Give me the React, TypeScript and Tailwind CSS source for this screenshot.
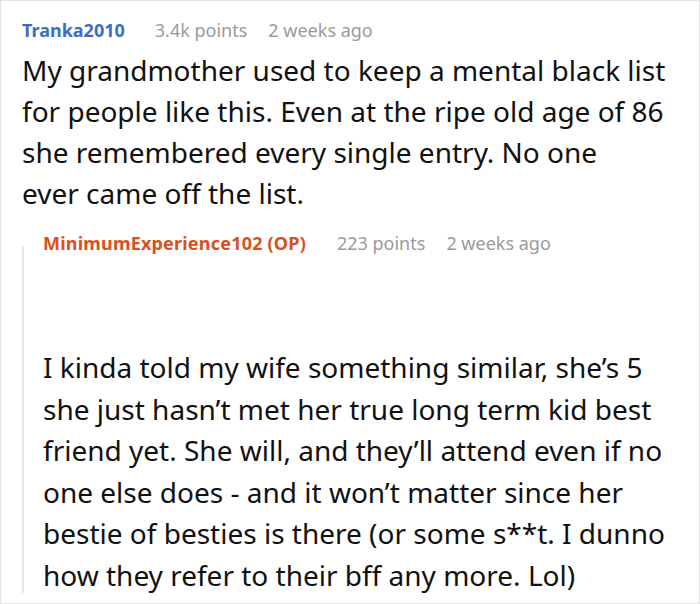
export default function App() {
  return (
    <div
      className="w-[700px] h-[604px] border border-[#e3e3e3] bg-white overflow-hidden text-[#111]"
      style={{ fontFamily: '"Noto Sans", "Open Sans", sans-serif' }}
    >
      <div className="pl-[21px] pr-2 pt-[15px]">
        <div className="flex items-baseline text-[18px] leading-[28px]">
          <span className="font-bold text-[#3c6ec2]">Tranka2010</span>
          <span className="ml-[30px] text-[#9a9a9a]">3.4k points</span>
          <span className="ml-[21px] text-[#9a9a9a]">2 weeks ago</span>
        </div>
        <p className="mt-[6px] text-[28px] leading-[41px]">
          My grandmother used to keep a mental black list
          <br />
          for people like this. Even at the ripe old age of 86
          <br />
          she remembered every single entry. No one
          <br />
          ever came off the list.
        </p>

        <div className="mt-[15px] flex">
          <div className="mt-[17px] mb-[4px] w-[2px] shrink-0 bg-[#e8e8e8]" />
          <div className="pl-[19px]">
            <div className="flex items-baseline text-[18px] leading-[28px]">
              <span className="font-bold tracking-[0.2px] text-[#d9501c]">MinimumExperience102 (OP)</span>
              <span className="ml-[31px] text-[#9a9a9a]">223 points</span>
              <span className="ml-[21px] text-[#9a9a9a]">2 weeks ago</span>
            </div>
            <p className="mt-[90px] text-[28px] leading-[41.6px]">
              I kinda told my wife something similar, she’s 5 she just hasn’t met her true long term kid best friend
              yet. She will, and they’ll attend even if no one else does - and it won’t matter since her bestie of
              besties is there (or some s**t. I dunno how they refer to their bff any more. Lol)
            </p>
          </div>
        </div>
      </div>
    </div>
  )
}
